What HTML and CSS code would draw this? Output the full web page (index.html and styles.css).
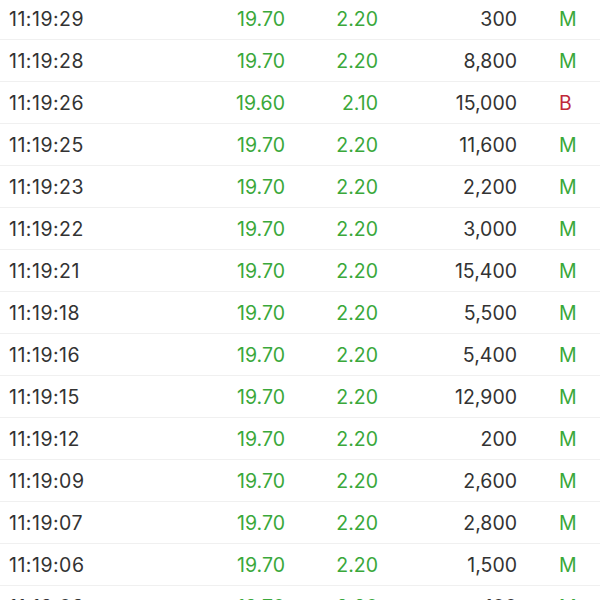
FILE: index.html
```html
<!DOCTYPE html>
<html>
<head>
<meta charset="utf-8">
<link rel="stylesheet" href="styles.css">
</head>
<body>
<div class="list">
  <div class="row"><span class="time">11:19:29</span><span class="price up">19.70</span><span class="chg up">2.20</span><span class="vol">300</span><span class="type m">M</span></div>
  <div class="row"><span class="time">11:19:28</span><span class="price up">19.70</span><span class="chg up">2.20</span><span class="vol">8,800</span><span class="type m">M</span></div>
  <div class="row"><span class="time">11:19:26</span><span class="price up">19.60</span><span class="chg up">2.10</span><span class="vol">15,000</span><span class="type b">B</span></div>
  <div class="row"><span class="time">11:19:25</span><span class="price up">19.70</span><span class="chg up">2.20</span><span class="vol">11,600</span><span class="type m">M</span></div>
  <div class="row"><span class="time">11:19:23</span><span class="price up">19.70</span><span class="chg up">2.20</span><span class="vol">2,200</span><span class="type m">M</span></div>
  <div class="row"><span class="time">11:19:22</span><span class="price up">19.70</span><span class="chg up">2.20</span><span class="vol">3,000</span><span class="type m">M</span></div>
  <div class="row"><span class="time">11:19:21</span><span class="price up">19.70</span><span class="chg up">2.20</span><span class="vol">15,400</span><span class="type m">M</span></div>
  <div class="row"><span class="time">11:19:18</span><span class="price up">19.70</span><span class="chg up">2.20</span><span class="vol">5,500</span><span class="type m">M</span></div>
  <div class="row"><span class="time">11:19:16</span><span class="price up">19.70</span><span class="chg up">2.20</span><span class="vol">5,400</span><span class="type m">M</span></div>
  <div class="row"><span class="time">11:19:15</span><span class="price up">19.70</span><span class="chg up">2.20</span><span class="vol">12,900</span><span class="type m">M</span></div>
  <div class="row"><span class="time">11:19:12</span><span class="price up">19.70</span><span class="chg up">2.20</span><span class="vol">200</span><span class="type m">M</span></div>
  <div class="row"><span class="time">11:19:09</span><span class="price up">19.70</span><span class="chg up">2.20</span><span class="vol">2,600</span><span class="type m">M</span></div>
  <div class="row"><span class="time">11:19:07</span><span class="price up">19.70</span><span class="chg up">2.20</span><span class="vol">2,800</span><span class="type m">M</span></div>
  <div class="row"><span class="time">11:19:06</span><span class="price up">19.70</span><span class="chg up">2.20</span><span class="vol">1,500</span><span class="type m">M</span></div>
  <div class="row"><span class="time">11:19:03</span><span class="price up">19.70</span><span class="chg up">2.20</span><span class="vol">100</span><span class="type m">M</span></div>
</div>
</body>
</html>
```
FILE: styles.css
```css
html, body {
  margin: 0;
  padding: 0;
  background: #ffffff;
  overflow: hidden;
}
body {
  font-family: Inter, "Liberation Sans", sans-serif;
  font-size: 19.5px;
  color: #333333;
}
.list {
  margin-top: -2px;
}
.row {
  display: flex;
  align-items: center;
  height: 41px;
  border-bottom: 1px solid #f0f0f0;
  padding-left: 9px;
  white-space: nowrap;
}
.time { width: 180px; letter-spacing: 0.5px; }
.price { width: 96px; text-align: right; }
.chg { width: 93px; text-align: right; }
.vol { width: 139px; text-align: right; }
.type { width: 83px; padding-left: 42px; box-sizing: border-box; }
.up, .m { color: #3aa83a; }
.b { color: #c0283a; }
```
